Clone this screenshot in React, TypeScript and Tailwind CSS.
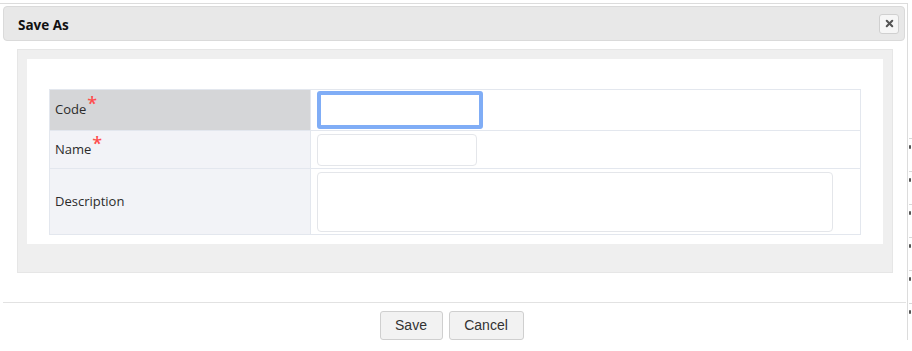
import { X } from "lucide-react";

function Required() {
  return (
    <span className="relative -top-[7px] ml-[1px] text-[18px] font-semibold leading-none text-[#ff4d4d]">*</span>
  );
}

function FieldRow({
  label,
  required,
  active,
  height,
  children,
}: {
  label: string;
  required?: boolean;
  active?: boolean;
  height: string;
  children: React.ReactNode;
}) {
  return (
    <div className={`flex border-b border-[#e3e7ee] last:border-b-0 ${height}`}>
      <div
        className={`flex w-[261px] shrink-0 items-center border-r border-[#e3e7ee] pl-[5px] text-[13px] text-[#2b2b2b] ${
          active ? "bg-[#d5d6d8]" : "bg-[#f2f3f7]"
        }`}
      >
        <span>{label}</span>
        {required && <Required />}
      </div>
      <div className="flex flex-1 items-center bg-white pl-[6px]">{children}</div>
    </div>
  );
}

export default function App() {
  return (
    <div className="relative h-[351px] w-[912px] overflow-hidden bg-white font-['Open_Sans',sans-serif]">
      <div className="mt-[3px] w-[908px] border-t border-r border-[#dcdcdc] bg-white px-[2px] pt-[2px]">
        {/* title bar */}
        <div className="ml-px flex h-[35px] w-[902px] items-center justify-between rounded-[4px] border border-[#dadada] bg-[#e8e8e8] pl-[14px] pr-[5px]">
          <span className="pt-[3px] text-[13.5px] font-bold text-[#111]">Save As</span>
          <button className="flex h-[20px] w-[20px] items-center justify-center rounded-[3px] border border-[#d0d0d0] bg-[#f6f6f6]">
            <X size={11} strokeWidth={4.5} className="text-[#555]" />
          </button>
        </div>

        {/* body */}
        <div className="ml-[15px] mt-[8px] w-[876px] border border-[#e6e6e6] bg-[#efefef] px-[9px] pb-[28px] pt-[9px]">
          <div className="bg-white px-[22px] pb-[9px] pt-[30px]">
            <div className="border border-[#e3e7ee]">
              <FieldRow label="Code" required active height="h-[41px]">
                <div className="rounded-[3px] border-[4px] border-[#80adf6] bg-white">
                  <div className="h-[30px] w-[158px] bg-white" />
                </div>
              </FieldRow>
              <FieldRow label="Name" required height="h-[38px]">
                <div className="h-[32px] w-[160px] rounded-[4px] border border-[#e4e6ea] bg-white" />
              </FieldRow>
              <FieldRow label="Description" height="h-[65px]">
                <div className="h-[60px] w-[516px] rounded-[4px] border border-[#e4e6ea] bg-white" />
              </FieldRow>
            </div>
          </div>
        </div>

        {/* footer */}
        <div className="mt-[29px] ml-px w-[903px] border-t border-[#e2e2e2]">
          <div className="flex justify-center gap-[6px] pr-[6px] pt-[8px] font-['Liberation_Sans',sans-serif] text-[14px] text-[#333]">
            <button className="h-[29px] w-[63px] rounded-[3px] border border-[#cfcfcf] bg-[#f2f2f2]">Save</button>
            <button className="h-[29px] w-[75px] rounded-[3px] border border-[#cfcfcf] bg-[#f2f2f2]">Cancel</button>
          </div>
        </div>
      </div>

      {/* page behind the dialog */}
      <div className="absolute right-0 top-[138px] flex w-[3px] flex-col gap-[22px]">
        {[0, 1, 2, 3, 4, 5].map((i) => (
          <div key={i} className="flex flex-col gap-[6px]">
            <div className="h-px w-[3px] bg-[#d8d8d8]" />
            <div className="h-[4px] w-[2px] rounded-full bg-[#555]" />
          </div>
        ))}
      </div>
    </div>
  );
}
